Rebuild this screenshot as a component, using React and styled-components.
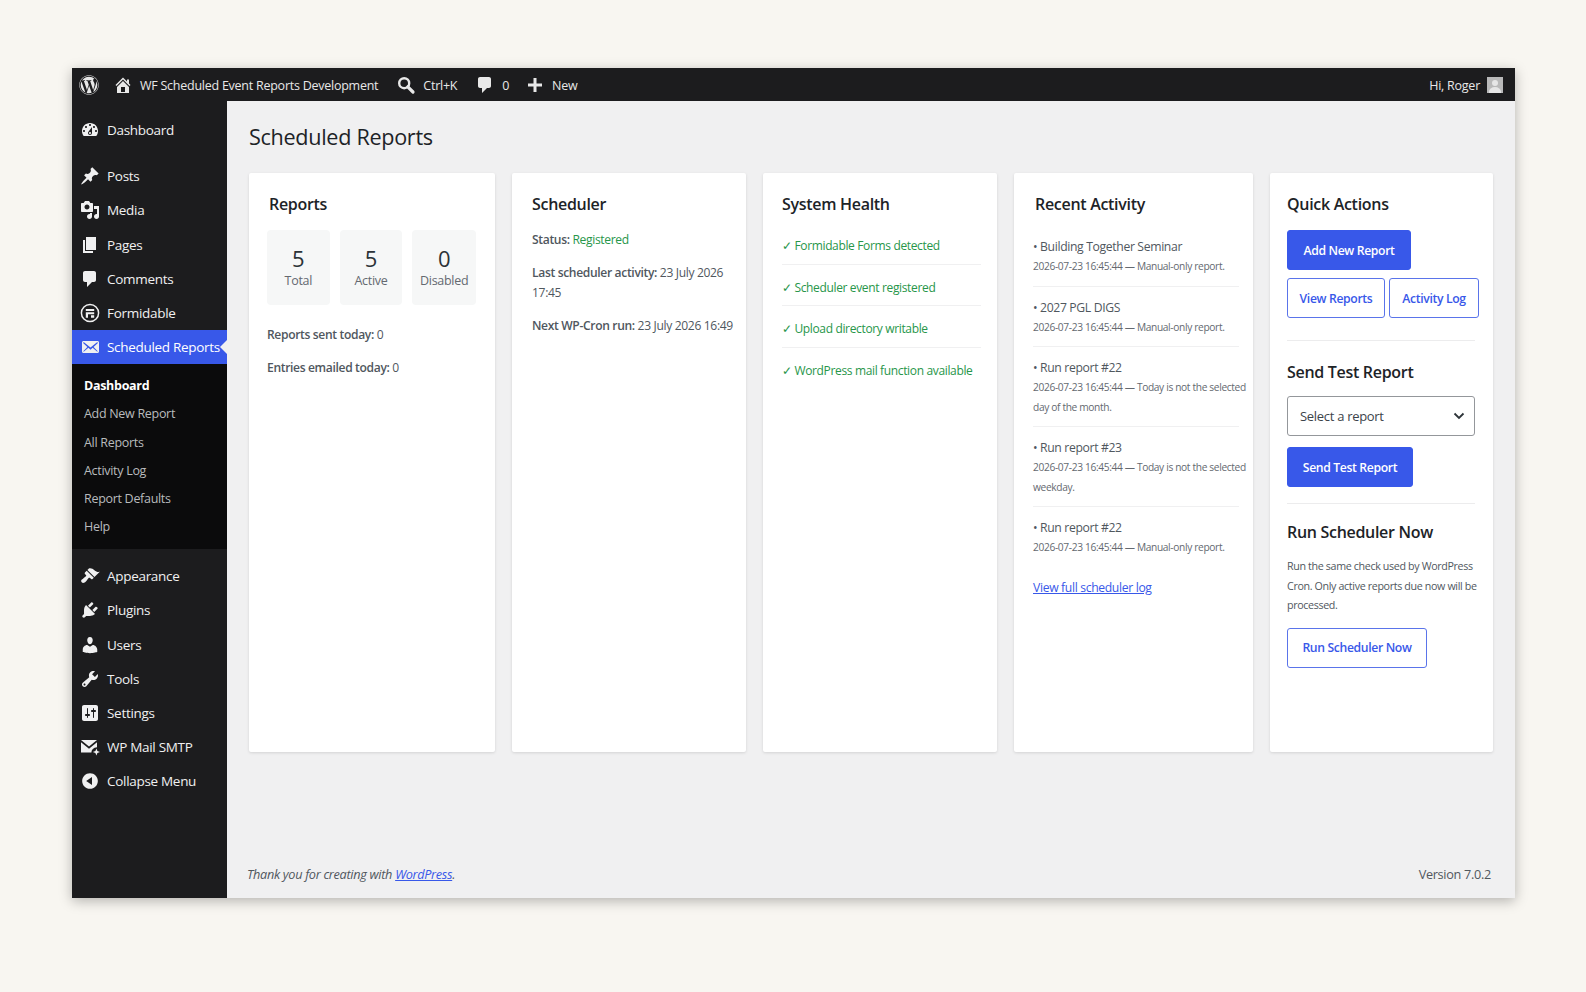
import styled, { createGlobalStyle } from 'styled-components';
import { FaWordpress } from 'react-icons/fa';

const GlobalStyle = createGlobalStyle`
  html, body {
    margin: 0;
    padding: 0;
    background: #f8f6f1;
  }
  body {
    font-family: 'Open Sans', 'Noto Sans', sans-serif;
    font-size: 12.5px;
    color: #50575e;
  }
  * {
    box-sizing: border-box;
  }
`;

const Page = styled.div`
  padding: 68px 71px 94px 72px;
  width: 1586px;
  height: 992px;
`;

const Window = styled.div`
  display: flex;
  flex-direction: column;
  width: 1443px;
  height: 830px;
  box-shadow: 0 3px 12px rgba(0, 0, 0, 0.28);
`;

const AdminBar = styled.header`
  display: flex;
  align-items: center;
  height: 33px;
  flex: none;
  padding: 1px 12px 0 7px;
  background: #1c1c1e;
  color: #e8e8e8;
`;

const BarItem = styled.div`
  display: flex;
  align-items: center;
  gap: ${(p) => p.$gap || 7}px;
  margin-left: ${(p) => p.$left || 0}px;
  white-space: nowrap;
  letter-spacing: -0.25px;
  svg {
    fill: #e8e8e8;
    flex: none;
  }
`;

const BarRight = styled(BarItem)`
  margin-left: auto;
`;

const Avatar = styled.div`
  position: relative;
  overflow: hidden;
  width: 16px;
  height: 16px;
  background: #b9b9b9;
  &::before {
    content: '';
    position: absolute;
    left: 5px;
    top: 3px;
    width: 6px;
    height: 6px;
    border-radius: 50%;
    background: #e6e6e6;
  }
  &::after {
    content: '';
    position: absolute;
    left: 2px;
    top: 10px;
    width: 12px;
    height: 10px;
    border-radius: 50%;
    background: #e6e6e6;
  }
`;

const Body = styled.div`
  display: flex;
  flex: 1;
  min-height: 0;
`;

const Sidebar = styled.nav`
  width: 155px;
  flex: none;
  padding-top: 12px;
  background: #1c1c1e;
`;

const MenuRow = styled.div`
  position: relative;
  display: flex;
  align-items: center;
  gap: 7px;
  height: 34.2px;
  padding-left: 8px;
  margin-bottom: ${(p) => p.$after || 0}px;
  font-size: 13.5px;
  letter-spacing: -0.3px;
  white-space: nowrap;
  color: ${(p) => (p.$active ? '#ffffff' : '#f0f0f1')};
  background: ${(p) => (p.$active ? '#3858e9' : 'transparent')};
  svg {
    flex: none;
    fill: #f0f0f1;
  }
  ${(p) =>
    p.$active &&
    `&::after {
      content: '';
      position: absolute;
      right: 0;
      top: 10px;
      border: 7px solid transparent;
      border-right-color: #f0f0f1;
      border-left-width: 0;
    }`}
`;

const SubMenu = styled.div`
  padding: 7px 0 8px;
  margin-bottom: 10px;
  background: #0b0b0c;
`;

const SubRow = styled.div`
  display: flex;
  align-items: center;
  height: 28.3px;
  padding-left: 12px;
  font-size: 12.5px;
  letter-spacing: -0.3px;
  font-weight: ${(p) => (p.$current ? 700 : 400)};
  color: ${(p) => (p.$current ? '#ffffff' : '#b9bbbd')};
`;

const Main = styled.main`
  display: flex;
  flex-direction: column;
  flex: 1;
  min-width: 0;
  padding: 21px 22px 0;
  background: #f0f0f1;
`;

const Title = styled.h1`
  margin: 0 0 21px;
  font-size: 21.6px;
  line-height: 30px;
  font-weight: 400;
  letter-spacing: -0.3px;
  color: #1d2327;
`;

const Cards = styled.div`
  display: grid;
  grid-template-columns: 246px 234px 234px 239px 223px;
  gap: 17px;
  height: 579px;
`;

const Card = styled.section`
  padding: 20px ${(p) => p.$right || 19}px 0 ${(p) => p.$left || 19}px;
  border-radius: 2px;
  background: #ffffff;
  box-shadow: 0 1px 3px rgba(0, 0, 0, 0.12);
  min-width: 0;
`;

const Heading = styled.h2`
  margin: ${(p) => p.$top || 0}px 0 ${(p) => p.$below || 14}px;
  font-size: 16px;
  line-height: 22px;
  font-weight: 600;
  letter-spacing: -0.3px;
  white-space: nowrap;
  color: #1d2327;
`;

const Stats = styled.div`
  display: flex;
  gap: 10px;
  margin: 0 0 20px -2px;
`;

const Stat = styled.div`
  display: flex;
  flex-direction: column;
  align-items: center;
  justify-content: center;
  width: ${(p) => p.$w}px;
  height: 75px;
  border-radius: 4px;
  background: #f6f7f7;
`;

const StatValue = styled.div`
  font-size: 22px;
  line-height: 26px;
  font-weight: 500;
  color: #2c3338;
`;

const StatLabel = styled.div`
  font-size: 12.5px;
  line-height: 20px;
  letter-spacing: -0.3px;
  color: #646970;
`;

const Para = styled.p`
  margin: 0 0 ${(p) => p.$below || 13.5}px ${(p) => p.$indent || 0}px;
  font-size: ${(p) => p.$size || 12.1}px;
  line-height: 19.5px;
  letter-spacing: -0.35px;
  white-space: nowrap;
  color: #50575e;
  b {
    font-weight: 600;
  }
`;

const Good = styled.span`
  color: #27964a;
`;

const HealthRow = styled.div`
  height: 41.5px;
  padding-top: 11px;
  border-bottom: ${(p) => (p.$last ? 'none' : '1px solid #f0f0f1')};
  font-size: 12px;
  line-height: 24px;
  letter-spacing: -0.35px;
  white-space: nowrap;
  color: #27964a;
`;

const LogRow = styled.div`
  padding: 0 0 ${(p) => (p.$last ? 0 : 9)}px;
  margin: 0 0 11px -2px;
  border-bottom: ${(p) => (p.$last ? 'none' : '1px solid #f0f0f1')};
`;

const LogTitle = styled.div`
  font-size: 12.2px;
  line-height: 20px;
  letter-spacing: -0.35px;
  white-space: nowrap;
  color: #50575e;
`;

const LogMeta = styled.div`
  font-size: 10.2px;
  line-height: 19.5px;
  letter-spacing: -0.35px;
  white-space: nowrap;
  color: #646970;
`;

const TextLink = styled.a`
  display: block;
  margin: 20px 0 0 -2px;
  font-size: 12.2px;
  line-height: 20px;
  letter-spacing: -0.35px;
  color: #3858e9;
  text-decoration: underline;
`;

const Button = styled.button`
  display: inline-flex;
  align-items: center;
  justify-content: center;
  height: 40px;
  width: ${(p) => p.$w}px;
  padding: 0;
  border: 1px solid ${(p) => (p.$outline ? '#5a74ea' : '#3858e9')};
  border-radius: 3px;
  font-family: inherit;
  font-size: 12.2px;
  font-weight: 600;
  letter-spacing: -0.35px;
  white-space: nowrap;
  color: ${(p) => (p.$outline ? '#3858e9' : '#ffffff')};
  background: ${(p) => (p.$outline ? '#ffffff' : '#3858e9')};
`;

const ButtonRow = styled.div`
  display: flex;
  gap: 4px;
  margin-top: 8px;
`;

const Rule = styled.hr`
  height: 1px;
  margin: ${(p) => p.$top}px 4px 0 0;
  border: 0;
  background: #ececed;
`;

const SelectWrap = styled.div`
  position: relative;
  width: 188px;
  margin-bottom: 11px;
  svg {
    position: absolute;
    right: 10px;
    top: 16px;
    pointer-events: none;
  }
`;

const Select = styled.select`
  display: block;
  width: 100%;
  height: 40px;
  padding: 0 12px;
  border: 1.5px solid #94979b;
  border-radius: 3px;
  appearance: none;
  font-family: inherit;
  font-size: 13px;
  letter-spacing: -0.3px;
  color: #3c434a;
  background: #ffffff;
`;

const Footer = styled.footer`
  display: flex;
  justify-content: space-between;
  margin: auto 2px 14px -2px;
  font-size: 12.7px;
  line-height: 20px;
  letter-spacing: -0.3px;
  color: #50575e;
  em a {
    color: #3858e9;
  }
`;

const Dash = ({ d, size = 20 }) => (
  <svg width={size} height={size} viewBox="0 0 20 20">
    <path d={d} />
  </svg>
);

const icons = {
  dashboard:
    'M3.76 16h12.48c1.1-1.37 1.76-3.11 1.76-5 0-4.42-3.58-8-8-8s-8 3.58-8 8c0 1.89.66 3.63 1.76 5zM10 4c.55 0 1 .45 1 1s-.45 1-1 1-1-.45-1-1 .45-1 1-1zM6 6c.55 0 1 .45 1 1s-.45 1-1 1-1-.45-1-1 .45-1 1-1zm8 0c.55 0 1 .45 1 1s-.45 1-1 1-1-.45-1-1 .45-1 1-1zm-5.37 5.55L12 7v6c0 1.1-.9 2-2 2s-2-.9-2-2c0-.57.24-1.08.63-1.45zM4 10c.55 0 1 .45 1 1s-.45 1-1 1-1-.45-1-1 .45-1 1-1zm12 0c.55 0 1 .45 1 1s-.45 1-1 1-1-.45-1-1 .45-1 1-1zm-5 3c0-.55-.45-1-1-1s-1 .45-1 1 .45 1 1 1 1-.45 1-1z',
  post: 'M10.44 3.02l1.82-1.82 6.36 6.35-1.83 1.82c-1.05-.68-2.48-.57-3.41.36l-.75.75c-.92.93-1.04 2.35-.35 3.41l-1.83 1.82-2.41-2.41-2.8 2.79c-.42.42-3.38 2.71-3.8 2.29s1.86-3.39 2.28-3.81l2.79-2.79L4.1 9.36l1.83-1.82c1.05.69 2.48.57 3.4-.36l.75-.75c.93-.92 1.05-2.35.36-3.41z',
  media:
    'M13 11V4c0-.55-.45-1-1-1h-1.67L9 1H5L3.67 3H2c-.55 0-1 .45-1 1v7c0 .55.45 1 1 1h10c.55 0 1-.45 1-1zM7 4.5c1.38 0 2.5 1.12 2.5 2.5S8.38 9.5 7 9.5 4.5 8.38 4.5 7 5.62 4.5 7 4.5zM14 6h5v10.5c0 1.38-1.12 2.5-2.5 2.5S14 17.88 14 16.5s1.12-2.5 2.5-2.5c.17 0 .34.02.5.05V9h-3V6zm-4 8.05V13h2v3.5c0 1.38-1.12 2.5-2.5 2.5S7 17.88 7 16.5 8.12 14 9.5 14c.17 0 .34.02.5.05z',
  page: 'M6 15V2h10v13H6zm-1 1h8v2H3V5h2v11z',
  comment:
    'M5 2h9c1.1 0 2 .9 2 2v7c0 1.1-.9 2-2 2h-2l-5 5v-5H5c-1.1 0-2-.9-2-2V4c0-1.1.9-2 2-2z',
  mail: 'M19 14.5v-9c0-.83-.67-1.5-1.5-1.5H3.49c-.83 0-1.5.67-1.5 1.5v9c0 .83.67 1.5 1.5 1.5H17.5c.83 0 1.5-.67 1.5-1.5zm-1.31-9.11c.33.33.15.67-.03.84L13.6 9.95l3.9 4.06c.12.14.2.36.06.51-.13.16-.43.15-.56.05l-4.37-3.73-2.14 1.95-2.13-1.95-4.37 3.73c-.13.1-.43.11-.56-.05-.14-.15-.06-.37.06-.51l3.9-4.06-4.06-3.72c-.18-.17-.36-.51-.03-.84s.67-.17.95.07l6.24 5.04 6.25-5.04c.28-.24.62-.4.95-.07z',
  appearance:
    'M14.48 11.06L7.41 3.99l1.5-1.5c.5-.56 2.3-.47 3.51.32 1.21.8 1.43 1.28 2.91 2.1 1.18.64 2.45 1.26 4.45.85zm-.71.71L6.7 4.7 4.93 6.47c-.39.39-.39 1.02 0 1.41l1.06 1.06c.39.39.39 1.03 0 1.42-.6.6-1.43 1.11-2.21 1.69-.35.26-.7.53-1.01.84C1.43 13.23.4 14.96 1.72 16.28s3.05.29 4.39-1.05c.31-.31.58-.66.84-1.01.58-.78 1.09-1.61 1.69-2.21.39-.39 1.03-.39 1.42 0l1.06 1.06c.39.39 1.02.39 1.41 0z',
  plugin:
    'M13.11 4.36L9.87 7.6 8 5.73l3.24-3.24c.35-.34 1.05-.2 1.56.32.52.51.66 1.21.31 1.55zm-8 1.77l.91-1.12 9.01 9.01-1.19.84c-.71.71-2.63 1.16-3.82 1.16H6.14L4.9 17.26c-.59.59-1.54.59-2.12 0-.59-.58-.59-1.53 0-2.12l1.24-1.24v-3.88c0-1.13.4-3.19 1.09-3.89zm7.26 3.97l3.24-3.24c.34-.35 1.04-.21 1.55.31.52.51.66 1.21.31 1.55l-3.24 3.25z',
  users:
    'M10 9.25c-2.27 0-2.73-3.44-2.73-3.44C7 4.02 7.82 2 9.97 2c2.16 0 2.98 2.02 2.71 3.81 0 0-.41 3.44-2.68 3.44zm0 2.57L12.72 10c2.39 0 4.52 2.33 4.52 4.53v2.49s-3.65 1.13-7.24 1.13c-3.65 0-7.24-1.13-7.24-1.13v-2.49c0-2.25 1.94-4.48 4.47-4.48z',
  tools:
    'M16.68 9.77c-1.34 1.34-3.3 1.67-4.95.99l-5.41 6.52c-.99.99-2.59.99-3.58 0s-.99-2.59 0-3.57l6.52-5.42c-.68-1.65-.35-3.61.99-4.95 1.28-1.28 3.12-1.62 4.72-1.06l-2.89 2.89 2.82 2.82 2.86-2.87c.53 1.58.18 3.39-1.08 4.65zM3.81 16.21c.4.39 1.04.39 1.43 0 .4-.4.4-1.04 0-1.43-.39-.4-1.03-.4-1.43 0-.39.39-.39 1.03 0 1.43z',
  settings:
    'M18 16V4c0-1.1-.9-2-2-2H4c-1.1 0-2 .9-2 2v12c0 1.1.9 2 2 2h12c1.1 0 2-.9 2-2zM8 11h1c.55 0 1 .45 1 1s-.45 1-1 1H8v1.5c0 .28-.22.5-.5.5s-.5-.22-.5-.5V13H6c-.55 0-1-.45-1-1s.45-1 1-1h1V5.5c0-.28.22-.5.5-.5s.5.22.5.5V11zm5-2h-1c-.55 0-1-.45-1-1s.45-1 1-1h1V5.5c0-.28.22-.5.5-.5s.5.22.5.5V7h1c.55 0 1 .45 1 1s-.45 1-1 1h-1v5.5c0 .28-.22.5-.5.5s-.5-.22-.5-.5V9z',
  collapse:
    'M10 2.16c4.33 0 7.84 3.51 7.84 7.84s-3.51 7.84-7.84 7.84S2.16 14.33 2.16 10 5.71 2.16 10 2.16zm2 11.72V6.12L6.18 9.97z',
  home: 'M16 8.5l1.53 1.53-1.06 1.06L10 4.62l-6.47 6.47-1.06-1.06L10 2.5l4 4v-2h2v4zm-6-2.46l6 5.99V18H4v-5.97zM12 17v-5H8v5h4z',
  plus: 'M8.5 3h3v5.5H17v3h-5.5V17h-3v-5.5H3v-3h5.5z',
};

const SearchIcon = () => (
  <svg width="20" height="20" viewBox="0 0 20 20">
    <circle cx="8.2" cy="8.2" r="5" fill="none" stroke="#e8e8e8" strokeWidth="2.4" />
    <path d="M11.8 11.8L17 17" stroke="#e8e8e8" strokeWidth="3.2" strokeLinecap="round" />
  </svg>
);

const FormidableIcon = () => (
  <svg width="20" height="20" viewBox="0 0 20 20">
    <circle cx="10" cy="10" r="8.6" fill="none" stroke="#f0f0f1" strokeWidth="1.5" />
    <path d="M5.8 6h8.4v2H5.8zM5.8 9.2h8.4v2H8v3.6H5.8zM11 12.2h3.2v2.6H11z" />
  </svg>
);

const MailStarIcon = () => (
  <svg width="20" height="20" viewBox="0 0 20 20">
    <path d="M1 3h16L9 9.6zM1 5.2v10.3h10.4c0-2.9 2-5 5.6-5.3v-5L9 11.8z" />
    <path d="M16.4 11.4l1 2.6 2.6 1-2.6 1-1 2.6-1-2.6-2.6-1 2.6-1z" />
  </svg>
);

const Chevron = () => (
  <svg width="12" height="8" viewBox="0 0 12 8">
    <path d="M1.5 1.5L6 6l4.5-4.5" fill="none" stroke="#2c3338" strokeWidth="1.8" />
  </svg>
);

const topMenu = [
  ['Dashboard', <Dash d={icons.dashboard} />, 12],
  ['Posts', <Dash d={icons.post} />],
  ['Media', <Dash d={icons.media} />],
  ['Pages', <Dash d={icons.page} />],
  ['Comments', <Dash d={icons.comment} />],
  ['Formidable', <FormidableIcon />],
];

const subMenu = ['Add New Report', 'All Reports', 'Activity Log', 'Report Defaults', 'Help'];

const bottomMenu = [
  ['Appearance', <Dash d={icons.appearance} />],
  ['Plugins', <Dash d={icons.plugin} />],
  ['Users', <Dash d={icons.users} />],
  ['Tools', <Dash d={icons.tools} />],
  ['Settings', <Dash d={icons.settings} />],
  ['WP Mail SMTP', <MailStarIcon />],
  ['Collapse Menu', <Dash d={icons.collapse} />],
];

const health = [
  'Formidable Forms detected',
  'Scheduler event registered',
  'Upload directory writable',
  'WordPress mail function available',
];

const stamp = '2026-07-23 16:45:44 — ';

const logs = [
  ['Building Together Seminar', 'Manual-only report.'],
  ['2027 PGL DIGS', 'Manual-only report.'],
  ['Run report #22', 'Today is not the selected', 'day of the month.'],
  ['Run report #23', 'Today is not the selected', 'weekday.'],
  ['Run report #22', 'Manual-only report.'],
];

function App() {
  return (
    <Page>
      <GlobalStyle />
      <Window>
        <AdminBar>
          <BarItem>
            <FaWordpress size={20} color="#e8e8e8" />
          </BarItem>
          <BarItem $left={14}>
            <Dash d={icons.home} />
            WF Scheduled Event Reports Development
          </BarItem>
          <BarItem $left={18}>
            <SearchIcon />
            Ctrl+K
          </BarItem>
          <BarItem $left={18}>
            <Dash d={icons.comment} />
            0
          </BarItem>
          <BarItem $left={16}>
            <Dash d={icons.plus} />
            New
          </BarItem>
          <BarRight>
            Hi, Roger
            <Avatar />
          </BarRight>
        </AdminBar>
        <Body>
          <Sidebar>
            {topMenu.map(([label, icon, after]) => (
              <MenuRow key={label} $after={after}>
                {icon}
                {label}
              </MenuRow>
            ))}
            <MenuRow $active>
              <Dash d={icons.mail} />
              Scheduled Reports
            </MenuRow>
            <SubMenu>
              <SubRow $current>Dashboard</SubRow>
              {subMenu.map((label) => (
                <SubRow key={label}>{label}</SubRow>
              ))}
            </SubMenu>
            {bottomMenu.map(([label, icon]) => (
              <MenuRow key={label}>
                {icon}
                {label}
              </MenuRow>
            ))}
          </Sidebar>
          <Main>
            <Title>Scheduled Reports</Title>
            <Cards>
              <Card $left={20}>
                <Heading $below={15}>Reports</Heading>
                <Stats>
                  <Stat $w={63}>
                    <StatValue>5</StatValue>
                    <StatLabel>Total</StatLabel>
                  </Stat>
                  <Stat $w={63}>
                    <StatValue>5</StatValue>
                    <StatLabel>Active</StatLabel>
                  </Stat>
                  <Stat $w={64}>
                    <StatValue>0</StatValue>
                    <StatLabel>Disabled</StatLabel>
                  </Stat>
                </Stats>
                <Para $indent={-2}>
                  <b>Reports sent today:</b> 0
                </Para>
                <Para $indent={-2}>
                  <b>Entries emailed today:</b> 0
                </Para>
              </Card>
              <Card $left={20}>
                <Heading $below={15}>Scheduler</Heading>
                <Para>
                  <b>Status:</b> <Good>Registered</Good>
                </Para>
                <Para>
                  <b>Last scheduler activity:</b> 23 July 2026
                  <br />
                  17:45
                </Para>
                <Para>
                  <b>Next WP-Cron run:</b> 23 July 2026 16:49
                </Para>
              </Card>
              <Card $left={19} $right={16}>
                <Heading $below={8}>System Health</Heading>
                {health.map((item, i) => (
                  <HealthRow key={item} $last={i === health.length - 1}>
                    ✓ {item}
                  </HealthRow>
                ))}
              </Card>
              <Card $left={21} $right={14}>
                <Heading $below={22}>Recent Activity</Heading>
                {logs.map(([title, first, second], i) => (
                  <LogRow key={i} $last={i === logs.length - 1}>
                    <LogTitle>• {title}</LogTitle>
                    <LogMeta>
                      {stamp}
                      {first}
                      {second && (
                        <>
                          <br />
                          {second}
                        </>
                      )}
                    </LogMeta>
                  </LogRow>
                ))}
                <TextLink href="#">View full scheduler log</TextLink>
              </Card>
              <Card $left={17} $right={14}>
                <Heading $below={15}>Quick Actions</Heading>
                <Button $w={124}>Add New Report</Button>
                <ButtonRow>
                  <Button $w={98} $outline>
                    View Reports
                  </Button>
                  <Button $w={90} $outline>
                    Activity Log
                  </Button>
                </ButtonRow>
                <Rule $top={22} />
                <Heading $top={20} $below={13}>
                  Send Test Report
                </Heading>
                <SelectWrap>
                  <Select defaultValue="">
                    <option value="">Select a report</option>
                  </Select>
                  <Chevron />
                </SelectWrap>
                <Button $w={126}>Send Test Report</Button>
                <Rule $top={16} />
                <Heading $top={17} $below={14}>
                  Run Scheduler Now
                </Heading>
                <Para $below={12} $size={10.7}>
                  Run the same check used by WordPress
                  <br />
                  Cron. Only active reports due now will be
                  <br />
                  processed.
                </Para>
                <Button $w={140} $outline>
                  Run Scheduler Now
                </Button>
              </Card>
            </Cards>
            <Footer>
              <em>
                Thank you for creating with <a href="#">WordPress</a>.
              </em>
              <span>Version 7.0.2</span>
            </Footer>
          </Main>
        </Body>
      </Window>
    </Page>
  );
}

export default App;
